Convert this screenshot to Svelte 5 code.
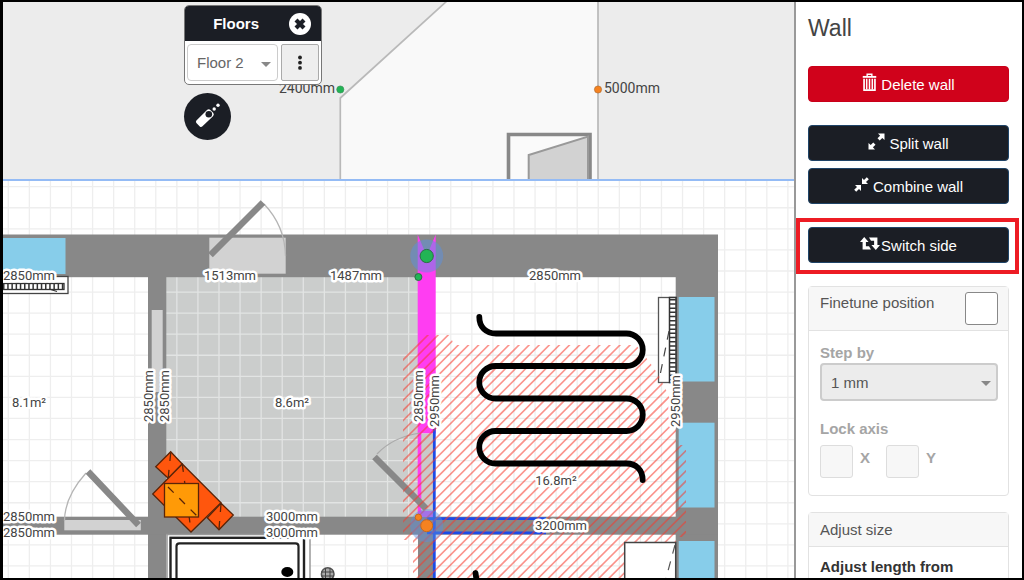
<script lang="ts">
	interface DimLabel {
		text: string;
		x: number;
		y: number;
		vertical?: boolean;
	}

	const GRID = 21.07;
	const HATCH = 10.1;

	let floor: string = $state('2');
	let step: string = $state('1');
	let finetune: boolean = $state(false);
	let lockX: boolean = $state(false);
	let lockY: boolean = $state(false);

	const gridX = Array.from({ length: 100 }, (_, i) => 8.3 + i * GRID);
	const gridY = Array.from({ length: 60 }, (_, i) => 186.7 + i * GRID);
	const hatchLines = Array.from({ length: 60 }, (_, i) => 722.6 + i * HATCH);

	const labels: DimLabel[] = [
		{ text: '2850mm', x: 29, y: 280 },
		{ text: '1513mm', x: 230, y: 280 },
		{ text: '1487mm', x: 356, y: 280 },
		{ text: '2850mm', x: 555, y: 280 },
		{ text: '2850mm', x: 29, y: 521 },
		{ text: '2850mm', x: 29, y: 537 },
		{ text: '3000mm', x: 292, y: 521 },
		{ text: '3000mm', x: 292, y: 537 },
		{ text: '3200mm', x: 561, y: 530 },
		{ text: '2850mm', x: 153, y: 396, vertical: true },
		{ text: '2850mm', x: 169, y: 396, vertical: true },
		{ text: '2850mm', x: 423, y: 396, vertical: true },
		{ text: '2950mm', x: 439, y: 401, vertical: true },
		{ text: '2950mm', x: 680, y: 401, vertical: true },
		{ text: '8.1m²', x: 29, y: 407 },
		{ text: '8.6m²', x: 292, y: 407 },
		{ text: '16.8m²', x: 556, y: 485 }
	];
</script>

<div class="editor">
	<main class="canvas">
		<section class="elevation">
			<svg class="drawing" aria-label="Wall elevation">
				<g transform="translate(-3 -2)">
					<path d="M448 0L340.3 98V182H598V0Z" fill="#f9f9f9" stroke="#b9b9b9" stroke-width="1.7" />
					<path d="M508.5 182V134.5H590V182" fill="#fafafa" stroke="#888" stroke-width="3.6" />
					<path d="M528.7 182V155L588 136.5V182" fill="#d2d2d2" stroke="#999" stroke-width="2" />
					<circle cx="340.3" cy="89.5" r="3.6" fill="#22b455" stroke="#3a8a55" stroke-width="0.6" />
					<circle cx="598" cy="89.5" r="3.6" fill="#f58220" stroke="#a8652a" stroke-width="0.6" />
					<text class="elevation-label" x="279" y="93">2400mm</text>
					<text class="elevation-label" x="604" y="93">5000mm</text>
				</g>
			</svg>
		</section>

		<section class="plan">
			<svg class="drawing" aria-label="Floor plan">
				<defs>
					<clipPath id="hatch-area">
						<path d="M403 357L422 335H450L454 345H636L648 360L658 374L668 394L676 420V445H686V537H676V900H413V540H403Z" />
					</clipPath>
				</defs>
				<g transform="translate(-3 -181)">
					<g stroke="#eee" stroke-width="1.3">
						{#each gridX as x}
							<line x1={x} x2={x} y1="181" y2="1400" />
						{/each}
						{#each gridY as y}
							<line x1="0" x2="2100" y1={y} y2={y} />
						{/each}
					</g>

					<!-- tiled room -->
					<rect x="166" y="277" width="252" height="240" fill="#cbcdcc" />
					<g stroke="#e2e4e3" stroke-width="1.3">
						{#each gridX.filter(x => x > 166 && x < 418) as x}
							<line x1={x} x2={x} y1="277" y2="517" />
						{/each}
						{#each gridY.filter(y => y > 277 && y < 517) as y}
							<line x1="166" x2="418" y1={y} y2={y} />
						{/each}
					</g>

					<!-- walls -->
					<g fill="#888">
						<rect x="0" y="234.5" width="718" height="42.7" />
						<rect x="675.7" y="240" width="42.3" height="400" />
						<rect x="148" y="240" width="18.3" height="400" />
						<rect x="0" y="516.7" width="718" height="18" />
						<rect x="418" y="530" width="16" height="100" />
					</g>

					<!-- windows -->
					<g fill="#87cdea">
						<rect x="0" y="238" width="65.5" height="36" />
						<rect x="678.7" y="297" width="35.8" height="84.5" />
						<rect x="678.7" y="422.7" width="35.8" height="84.8" />
						<rect x="678.7" y="541" width="35.8" height="90" />
					</g>
					<rect x="151.7" y="310" width="11" height="82" fill="#d2d2d2" />

					<!-- doors -->
					<g fill="#d2d2d2">
						<rect x="209.3" y="237.7" width="76.4" height="36" />
						<rect x="64.3" y="520" width="76.5" height="10.3" />
					</g>
					<g fill="none" stroke="#b5b5b5" stroke-width="1.3">
						<path d="M264 204Q285 226 285.5 256" />
						<path d="M86 473Q64.5 497 64.5 521" />
					</g>
					<g stroke="#888" stroke-width="6.5">
						<path d="M210.5 255L263 202.5" />
						<path d="M88 471.5L138.5 525" />
					</g>

					<!-- radiators -->
					<rect x="-4" y="276.5" width="72" height="17" fill="#fff" stroke="#444" stroke-width="1.3" />
					<rect x="-4" y="283.5" width="68" height="6" fill="#fff" stroke="#333" stroke-width="1.3" />
					<path d="M3 286.5H64" stroke="#333" stroke-width="5" stroke-dasharray="1.5 2.7" />
					<path d="M49 289L57 291.5" stroke="#333" stroke-width="1.2" />
					<rect x="658.5" y="297.5" width="17.5" height="85" fill="#fff" stroke="#555" stroke-width="1.3" />
					<rect x="669.5" y="297.5" width="6.5" height="85" fill="#fff" stroke="#333" stroke-width="1.5" />
					<path d="M672.8 299V382" stroke="#333" stroke-width="6" stroke-dasharray="1.5 2.7" />
					<path d="M660.5 373L669 331" stroke="#444" stroke-width="1.2" stroke-dasharray="9 8" />

					<!-- sofa -->
					<g fill="#ff560d" stroke="#5a2408" stroke-width="1.3">
						<path d="M170.7 451.7L182.3 464L168.3 478.3L155.7 466.7Z" />
						<path d="M182.3 464L221 502.7L191 532L152.7 494Z" />
						<path d="M221 503.3L233.3 515L219 529.7L207.3 517.7Z" />
						<path d="M170.7 453L168.3 477M182.3 464L191 531M221 504L219 529" fill="none" stroke-dasharray="8 9" />
						<rect x="164.5" y="483.5" width="34" height="33.5" fill="#ff9a07" />
						<path d="M168 487L197.5 516.5" stroke-dasharray="8 8" />
					</g>

					<!-- shower -->
					<rect x="167" y="534.5" width="143" height="80" fill="#fff" stroke="#999" stroke-width="1.5" />
					<rect x="170.5" y="537.8" width="133.5" height="80" fill="#fff" stroke="#222" stroke-width="2.4" />
					<rect x="176.5" y="543.3" width="122" height="80" rx="3" fill="#fff" stroke="#222" stroke-width="2.2" />
					<ellipse cx="287.3" cy="572" rx="6" ry="5" />
					<circle cx="327.7" cy="574" r="6.3" fill="#aaa" stroke="#555" stroke-width="1.5" />
					<path d="M321 572H334M321 576H334M325.5 568V580M330 568V580" stroke="#444" />

					<!-- selected wall -->
					<path d="M417.7 234.5L426.7 256L435.7 234.5V433.5H417.7Z" fill="#ff3df2" />
					<rect x="421" y="433.5" width="12" height="78" fill="#c9c9c9" />
					<rect x="417.7" y="433" width="3.6" height="84" fill="#ff3df2" />
					<rect x="421" y="511" width="13" height="6" fill="#e05cf0" />
					<path d="M377 454Q393 437 420 433" fill="none" stroke="#aaa" stroke-width="1.2" />
					<path d="M374.5 457L426 508.5" stroke="#888" stroke-width="6.5" />

					<g stroke="#1c4be8" stroke-width="2.8">
						<path d="M434.3 428V640" />
						<path d="M427 518.6H546M427 532.8H546" />
					</g>

					<g clip-path="url(#hatch-area)" stroke="#f7382c" stroke-opacity="0.55" stroke-width="1.6">
						{#each hatchLines as sum}
							<line x1={sum - 320} y1="320" x2={sum - 620} y2="620" />
						{/each}
					</g>

					<!-- floor heating loops -->
					<g fill="none" stroke="#000" stroke-width="5.8" stroke-linecap="round">
						<path d="M479.3 317C479.3 327 486 333.5 496 333.5H626.5A16.2 16.2 0 0 1 626.5 366H495.5A16.2 16.2 0 0 0 495.5 398.5H626.5A16.2 16.2 0 0 1 626.5 431H495.5A16.2 16.2 0 0 0 495.5 463.5H626.5C636 463.5 642.7 470 642.7 480" />
						<path d="M475.5 573L478 590" />
					</g>

					<rect x="624.7" y="542.5" width="51" height="90" fill="#fff" stroke="#444" stroke-width="1.5" />
					<path d="M675 545L665 582" stroke="#555" stroke-width="1.2" stroke-dasharray="9 8" />

					<!-- wall end handles -->
					<circle cx="426.7" cy="256" r="16.5" fill="#5c8fdd" fill-opacity="0.5" />
					<circle cx="426.7" cy="525.5" r="16.5" fill="#5c8fdd" fill-opacity="0.45" />
					<g stroke-width="1">
						<circle cx="426.7" cy="256" r="6.6" fill="#22b455" stroke="#2a6e45" />
						<circle cx="418.4" cy="277" r="3.5" fill="#22b455" stroke="#2a6e45" />
						<circle cx="426.7" cy="525.7" r="6" fill="#f58220" stroke="#c56a20" />
						<circle cx="418.4" cy="517.3" r="3.2" fill="#f58220" stroke="#c56a20" />
					</g>

					{#each labels as label}
						<text
							class="dim"
							x={label.x}
							y={label.y}
							transform={label.vertical ? `rotate(-90 ${label.x} ${label.y})` : undefined}
						>{label.text}</text>
					{/each}
				</g>
			</svg>
		</section>

		<div class="tools">
			<div class="floors">
				<div class="floors-header">
					<h2>Floors</h2>
					<button class="close" aria-label="Close">
						<svg width="22" height="22" viewBox="0 0 22 22">
							<circle cx="11" cy="11" r="11" fill="#fff" />
							<path d="M7 7L15 15M15 7L7 15" stroke="#1b1e25" stroke-width="4.2" />
						</svg>
					</button>
				</div>
				<div class="floors-body">
					<div class="select-wrap">
						<select aria-label="Floor" bind:value={floor}>
							<option value="1">Floor 1</option>
							<option value="2">Floor 2</option>
						</select>
					</div>
					<button class="more" aria-label="Floor options">
						<svg width="6" height="16" viewBox="0 0 6 16" fill="#222">
							<circle cx="3" cy="2.5" r="1.9" />
							<circle cx="3" cy="7.7" r="1.9" />
							<circle cx="3" cy="12.9" r="1.9" />
						</svg>
					</button>
				</div>
			</div>
			<button class="laser" aria-label="Laser meter">
				<svg width="47" height="47" viewBox="0 0 47 47" fill="#fff">
					<path d="M12.4 27.6L23 17Q24.8 15.4 26.6 17.2L29.2 19.8Q30.6 21.5 29 23.2L18.2 33.6Q17 34.6 15.8 33.4L12.4 30Q11.4 28.8 12.4 27.6Z" />
					<circle cx="24.8" cy="21.2" r="3.3" fill="#1b1e25" />
					<circle cx="30.2" cy="16" r="1.7" />
					<circle cx="34" cy="12.3" r="1.7" />
				</svg>
			</button>
		</div>
	</main>

	<aside class="sidebar">
		<h1>Wall</h1>

		<button class="btn danger">
			<svg class="raised" width="15" height="19" viewBox="0 0 16 20" fill="none" stroke="#fff">
				<path d="M5.5 3V1.2H10.5V3" stroke-width="1.5" />
				<path d="M0.8 4H15.2" stroke-width="2" />
				<path d="M2.2 6V18.2H13.8V6" stroke-width="1.8" />
				<path d="M5 6V17.5M8 6V17.5M11 6V17.5" stroke-width="1.6" />
			</svg>
			Delete wall
		</button>

		<div class="btn-group">
			<button class="btn">
				<svg class="raised" width="17" height="17" viewBox="0 0 17 17" fill="#fff">
					<path d="M10 0.5H16.5V7L14.3 4.9L11.7 7.5L9.5 5.3L12.1 2.7Z" />
					<path d="M7 16.5H0.5V10L2.7 12.1L5.3 9.5L7.5 11.7L4.9 14.3Z" />
				</svg>
				Split wall
			</button>
			<button class="btn">
				<svg class="raised" width="15" height="15" viewBox="0 0 15 15" fill="#fff">
					<path d="M8 7V1L10 3L12.8 0.2L14.8 2.2L12 5L14 7Z" />
					<path d="M7 8V14L5 12L2.2 14.8L0.2 12.8L3 10L1 8Z" />
				</svg>
				Combine wall
			</button>
		</div>

		<div class="highlight">
			<button class="btn tight">
				<svg class="raised" width="20" height="13" viewBox="0 0 20 13" fill="#fff">
					<path d="M4.2 0L8.6 5H5.9V9.3H9L11 12.4H2.6V5H0Z" />
					<path d="M15.8 13L11.4 8H14.1V3.7H11L9 0.6H17.4V8H20Z" />
				</svg>
				Switch side
			</button>
		</div>

		<section class="card">
			<div class="card-header finetune">
				<label for="finetune">Finetune position</label>
				<input id="finetune" type="checkbox" bind:checked={finetune} />
			</div>
			<div class="card-body muted">
				<label class="field-label" for="step">Step by</label>
				<div class="select-wrap">
					<select id="step" bind:value={step} disabled={!finetune}>
						<option value="1">1 mm</option>
						<option value="10">10 mm</option>
					</select>
				</div>
				<div class="field-label axis-title" id="axis-title">Lock axis</div>
				<div class="axes" role="group" aria-labelledby="axis-title">
					<label><input type="checkbox" bind:checked={lockX} disabled={!finetune} />X</label>
					<label><input type="checkbox" bind:checked={lockY} disabled={!finetune} />Y</label>
				</div>
			</div>
		</section>

		<section class="card">
			<div class="card-header">Adjust size</div>
			<div class="card-body size-body">
				<div class="field-label">Adjust length from</div>
			</div>
		</section>
	</aside>
</div>

<style>
	:global(body) {
		font-family: 'Liberation Sans', Arial, sans-serif;
		font-size: 15px;
		color: #444;
	}

	.editor {
		box-sizing: border-box;
		display: flex;
		height: 100vh;
		border: 2px solid #000;
		border-left-width: 3px;
		overflow: hidden;
		background: #fff;
	}

	.canvas {
		position: relative;
		flex: 1;
		min-width: 0;
		display: flex;
		flex-direction: column;
	}

	.elevation {
		flex: 0 0 177px;
		background: #ececec;
		border-bottom: 2px solid #94bbf5;
	}

	.plan {
		flex: 1;
		min-height: 0;
		background: #fff;
	}

	.drawing {
		display: block;
		width: 100%;
		height: 100%;
	}

	.elevation-label,
	.dim {
		font-family: Roboto, sans-serif;
		fill: #444;
	}

	.elevation-label {
		font-size: 14px;
	}

	.dim {
		font-size: 13px;
		text-anchor: middle;
		stroke: #fff;
		stroke-width: 5px;
		stroke-linejoin: round;
		paint-order: stroke;
	}

	.tools {
		position: absolute;
		top: 3px;
		left: 181px;
	}

	.floors {
		box-sizing: border-box;
		width: 138px;
		border: 1px solid #777;
		border-radius: 5px;
		background: #fff;
		overflow: hidden;
	}

	.floors-header {
		display: flex;
		align-items: center;
		justify-content: flex-end;
		gap: 30px;
		height: 35px;
		padding-right: 10px;
		background: #1b1e25;
	}

	.floors-header h2 {
		margin: 0;
		font-size: 15px;
		color: #fff;
	}

	.floors-body {
		display: flex;
		gap: 3px;
		padding: 3px 2px;
	}

	.floors-body .select-wrap {
		flex: 1;
	}

	button {
		padding: 0;
		border: none;
		font: inherit;
		cursor: pointer;
	}

	.close {
		display: flex;
		background: none;
	}

	.more {
		display: flex;
		align-items: center;
		justify-content: center;
		width: 38px;
		border: 1px solid #aaa;
		border-radius: 2px;
		background: #eee;
	}

	.laser {
		display: flex;
		margin-top: 8px;
		border-radius: 50%;
		background: #1b1e25;
	}

	.select-wrap {
		position: relative;
	}

	.select-wrap::after {
		content: '';
		position: absolute;
		top: calc(50% - 1px);
		right: 7px;
		border: 5px solid transparent;
		border-top-color: #888;
		border-bottom: none;
		pointer-events: none;
	}

	select {
		box-sizing: border-box;
		display: block;
		width: 100%;
		height: 37px;
		padding: 0 9px;
		border: 1px solid #ccc;
		border-radius: 4px;
		background: #fff;
		color: #666;
		font: inherit;
		appearance: none;
	}

	.sidebar {
		box-sizing: border-box;
		flex: 0 0 228px;
		padding: 12px 13px 0 12px;
		border-left: 2px solid #999;
		background: #fff;
		overflow: hidden;
	}

	h1 {
		margin: 0 0 24px;
		font-size: 23px;
		font-weight: 400;
		line-height: 28px;
	}

	.btn {
		box-sizing: border-box;
		display: flex;
		align-items: center;
		justify-content: center;
		gap: 4px;
		width: 100%;
		height: 36px;
		border: 1px solid #1f4468;
		border-radius: 4px;
		background: #1b1e25;
		color: #fff;
	}

	.btn.danger {
		border-color: #c90019;
		background: #d0021b;
	}

	.btn.tight {
		gap: 1px;
	}

	.btn-group {
		display: flex;
		flex-direction: column;
		gap: 7px;
		margin: 23px 0;
	}

	.raised {
		margin-bottom: 3px;
	}

	.highlight {
		position: relative;
		margin-bottom: 23px;
	}

	.highlight::after {
		content: '';
		position: absolute;
		inset: -9px -10px -11px -12px;
		border: 4px solid #ed1c24;
		pointer-events: none;
	}

	.card {
		margin-bottom: 16px;
		border: 1px solid #e2e2e2;
		border-radius: 4px;
	}

	.card-header {
		padding: 8px 11px;
		border-bottom: 1px solid #e2e2e2;
		background: #f7f7f7;
		line-height: 17px;
		color: #555;
	}

	.finetune {
		display: flex;
		justify-content: space-between;
		padding: 5px 10px 5px 11px;
	}

	.finetune label {
		padding-top: 2px;
	}

	.card-body {
		padding: 12px 10px 17px 11px;
	}

	.size-body {
		padding-top: 10px;
		color: #333;
	}

	.muted {
		color: #a5a5a5;
	}

	.field-label {
		display: block;
		font-weight: 700;
		line-height: 20px;
	}

	.muted select {
		height: 38px;
		border: 2px solid #ccc;
		background: #ececec;
		color: #555;
		opacity: 1;
	}

	.axis-title {
		margin: 18px 0 6px;
	}

	.axes {
		display: flex;
		gap: 16px;
		font-weight: 700;
	}

	.axes label {
		display: flex;
		gap: 7px;
		line-height: 26px;
	}

	input[type='checkbox'] {
		box-sizing: border-box;
		width: 33px;
		height: 33px;
		margin: 0;
		border: 1px solid #888;
		border-radius: 3px;
		background: #fff;
		appearance: none;
	}

	input[type='checkbox']:checked {
		background: #1b1e25;
	}

	input[type='checkbox']:disabled {
		border-color: #ddd;
		background: #f7f7f7;
	}
</style>
